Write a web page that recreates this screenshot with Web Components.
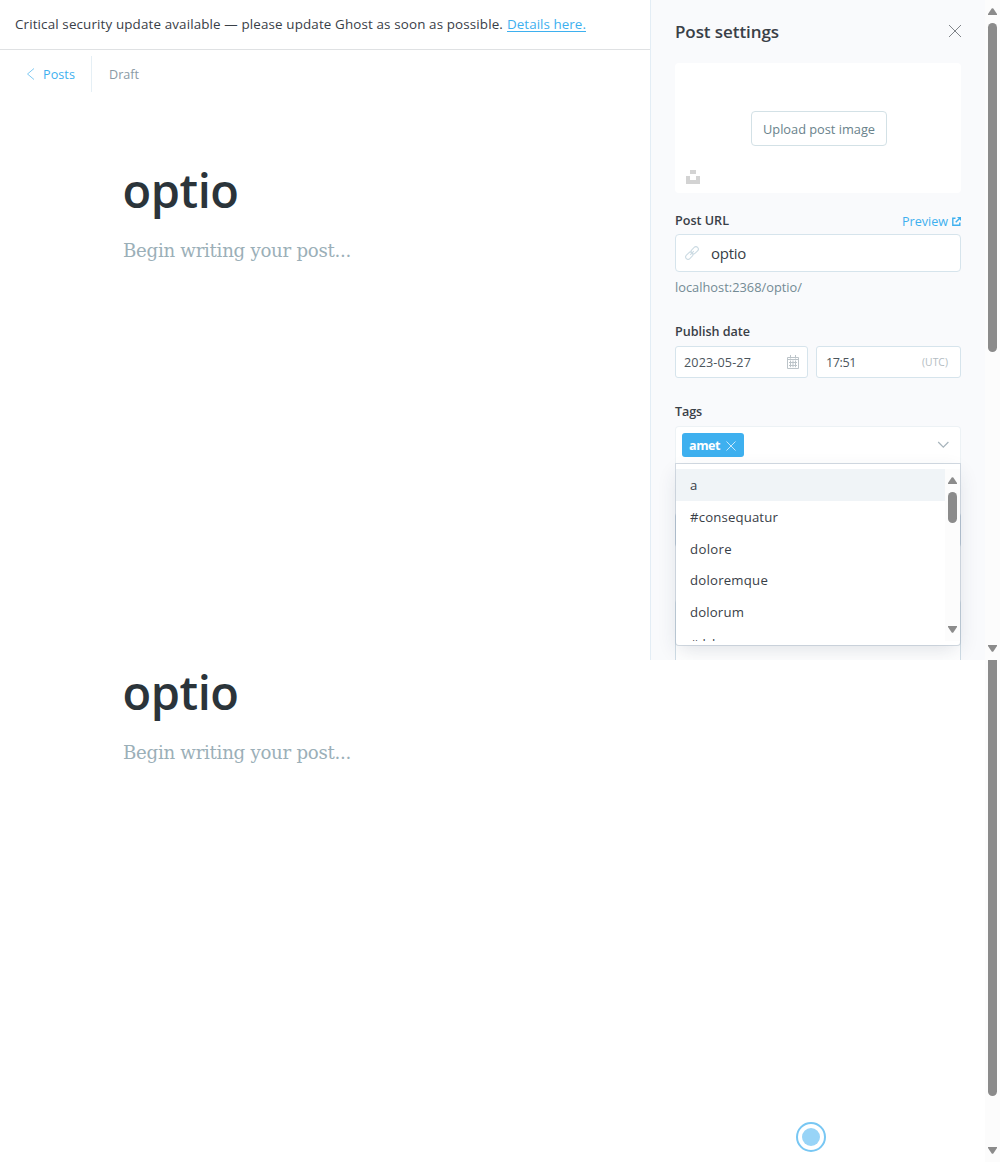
<!DOCTYPE html>
<html lang="en">
<head>
<meta charset="utf-8">
<title>Ghost editor</title>
<style>
html,body{margin:0;padding:0}
body{width:1000px;height:1162px;overflow:hidden;background:#fff;font-family:"Open Sans","Noto Sans",sans-serif;color:#394047}
</style>
</head>
<body>
<ghost-app></ghost-app>
<script>
const define = (name, html, init) => customElements.define(name, class extends HTMLElement {
  connectedCallback() {
    if (this.shadowRoot) return;
    const t = document.createElement('template');
    t.innerHTML = html;
    const root = this.attachShadow({mode: 'open'});
    root.appendChild(t.content.cloneNode(true));
    if (init) init(this, root);
  }
});

// Single line of text whose tracking is tuned to the width in its "w" attribute.
define('fit-text', `<style>:host{display:block;white-space:nowrap;flex:none}span{display:inline-block;text-decoration:var(--deco,none);text-underline-offset:2px}</style><span><slot></slot></span>`, (host, root) => {
  const target = +host.getAttribute('w');
  if (!target) return;
  const span = root.querySelector('span');
  const n = host.textContent.length;
  span.style.letterSpacing = ((target - span.getBoundingClientRect().width) / n) + 'px';
  host.style.width = target + 'px';
});

define('scroll-bar', `<style>
:host{display:flex;flex-direction:column;align-items:center;box-sizing:border-box;width:15px;background:#fcfcfc;flex:none}
svg{display:block;flex:none}
i{display:block;width:9px;border-radius:5px;background:#8b8b8b;height:var(--thumb);margin-top:var(--gap,8px)}
b{flex:1}
:host([tail]) i{border-radius:0 0 5px 5px;margin-top:0}
:host([tail]) .up{display:none}
</style>
<svg class="up" width="9" height="7" viewBox="0 0 9 7"><path d="M0 7V6L3.7.6Q4.5-.2 5.3.6L9 6V7Z" fill="#8b8b8b"/></svg><i></i><b></b>
<svg width="9" height="7" viewBox="0 0 9 7"><path d="M0 0V1L3.7 6.4Q4.5 7.2 5.3 6.4L9 1V0Z" fill="#8b8b8b"/></svg>`);

define('update-banner', `<style>
:host{display:flex;box-sizing:border-box;height:50px;padding:12px 15px 0;border-bottom:1px solid #dfe1e3;font-size:13.4px;line-height:24px;color:#394047;gap:4px}
a{color:#3eb0ef;--deco:underline}
</style><fit-text w="488">Critical security update available — please update Ghost as soon as possible.</fit-text><a><fit-text w="79">Details here.</fit-text></a>`);

define('editor-header', `<style>
:host{display:flex;height:36px;margin-top:6px;font-size:12.6px;line-height:38px}
.back{display:flex;box-sizing:border-box;width:92px;padding-left:26px;border-right:1px solid #e5eff5;color:#3eb0ef;gap:8px;align-items:center}
.back fit-text{align-self:flex-start}
fit-text.d{margin-left:17px;color:#8a9aa5}
svg{display:block}
</style><div class="back"><svg width="9" height="12" viewBox="0 0 9 12"><path d="M8 .5L1.5 6 8 11.5" fill="none" stroke="#7fc9f2" stroke-width="1"/></svg><fit-text w="32">Posts</fit-text></div><fit-text class="d" w="30">Draft</fit-text>`);

define('post-draft', `<style>
:host{display:block;padding-left:123px}
.t{font-size:47px;font-weight:560;line-height:60px;color:#2b343a;margin:0 0 0 -.5px}
.p{font-family:"DejaVu Serif",serif;font-size:18.2px;line-height:30px;color:#9bafb8;margin-top:16px}
</style><fit-text class="t" w="116">optio</fit-text><fit-text class="p" w="228">Begin writing your post...</fit-text>`);

define('image-uploader', `<style>
:host{display:flex;flex-direction:column;align-items:center;box-sizing:border-box;height:130px;background:#fff;border-radius:4px;padding-top:48px;margin-top:13px}
button{font:inherit;margin:0 0 0 2px;padding:1px 11px 0;width:136px;height:35px;border:1px solid #d3e1e6;border-radius:4px;background:#fff;font-size:12.8px;line-height:33px;color:#69828b;text-align:left}
svg{align-self:flex-start;margin:24px 0 0 11px;display:block}
fit-text{height:32px}
</style><button><fit-text w="112">Upload post image</fit-text></button>
<svg width="14" height="14" viewBox="0 0 14 14"><path d="M4 0h6v4H4zM0 6h4v4h6V6h4v8H0z" fill="#d3d3d3"/></svg>`);

define('field-label', `<style>:host{display:block;box-sizing:border-box;height:20px;font-size:12.6px;font-weight:600;line-height:22px;color:#394047}</style><slot></slot>`);

define('url-field', `<style>
:host{display:block;margin-top:17px}
.top{display:flex;justify-content:space-between;height:24px}
.pv{display:flex;gap:4px;align-items:center;height:22px;font-size:12.6px;line-height:24px;color:#3eb0ef}
.pv fit-text{height:22px}
.in{display:flex;align-items:center;box-sizing:border-box;height:38px;border:1px solid #d6e4ec;border-radius:4px;background:#fff;padding-left:9px;gap:12px;font-size:15px;line-height:36px;color:#394047}
.hint{font-size:12.8px;line-height:20px;margin-top:5px;color:#738a94}
</style><div class="top"><field-label><fit-text w="54">Post URL</fit-text></field-label><div class="pv"><fit-text w="46">Preview</fit-text>
<svg width="9" height="9" viewBox="0 0 9 9" fill="none" stroke="#3eb0ef" stroke-width="1.4"><path d="M3.5 1.2H.8v7h7V5.5M3.7 5.3L7 2"/><path d="M5 0h4v4z" fill="#3eb0ef" stroke="none"/></svg></div></div>
<div class="in"><svg width="14" height="14" viewBox="0 0 14 14" fill="none" stroke="#ccdbe3" stroke-width="1.1"><g transform="rotate(-45 7 7)"><rect x="-.9" y="4.6" width="8.2" height="4.8" rx="2.4"/><rect x="6.7" y="4.6" width="8.2" height="4.8" rx="2.4"/><path d="M4.5 7h5"/></g></svg><fit-text w="35">optio</fit-text></div>
<fit-text class="hint" w="127">localhost:2368/optio/</fit-text>`);

define('date-field', `<style>
:host{display:block;margin-top:24px}
.row{display:flex;gap:8px;margin-top:5px}
.b{display:flex;align-items:center;justify-content:space-between;box-sizing:border-box;height:32px;border:1px solid #d6e4ec;border-radius:3px;background:#fff;font-size:12.6px;line-height:32px;color:#4b555c;width:133px;padding:0 8px 0 8px}
.b fit-text{height:30px}
.b+.b{width:145px;padding:0 12px 0 9px}
.b .u{font-size:10.3px;line-height:30px;color:#b3bcc2}
</style><field-label><fit-text w="75">Publish date</fit-text></field-label><div class="row"><div class="b"><fit-text w="67">2023-05-27</fit-text>
<svg width="12" height="14" viewBox="0 0 12 14" fill="none" stroke="#bcc4c9" stroke-width="1"><path d="M.5 2.5h11v11H.5zM.5 4.5h11M3.5 0v3.5M8.5 0v3.5M2 7.5h8M2 10.5h8M3.5 5.5v6.7M6 5.5v6.7M8.5 5.5v6.7"/></svg></div><div class="b"><fit-text w="30">17:51</fit-text><fit-text class="u" w="26">(UTC)</fit-text></div></div>`);

define('tag-token', `<style>:host{display:flex;align-items:center;box-sizing:border-box;width:62px;height:24px;border-radius:3px;background:#3eb0ef;color:#fff;padding:0 7px;gap:6px;font-size:12.6px;font-weight:700;line-height:26px}fit-text{height:24px}svg{margin-top:1px}</style>
<fit-text w="31">amet</fit-text><svg width="10" height="10" viewBox="0 0 10 10"><path d="M.5.5l9 9M9.5.5l-9 9" stroke="#c8e8fb" stroke-width="1"/></svg>`);

define('tag-menu', `<style>
:host{display:flex;box-sizing:border-box;width:286px;height:183px;border:1px solid rgba(170,184,198,.5);border-radius:0 0 4px 4px;background:#fff;background-clip:padding-box;box-shadow:0 7px 20px -4px rgba(39,54,90,.16);padding:5px 0 4px}
.l{flex:1;height:172px;overflow:hidden;font-size:13.2px;color:#394047}
.l div{height:31.75px;line-height:32px;padding-left:14px}
.l div:first-child{background:#f0f4f7}
scroll-bar{height:172px;padding:8px 0 8px}
</style><div class="l"><div><fit-text w="7.5">a</fit-text></div><div><fit-text w="88">#consequatur</fit-text></div><div><fit-text w="42">dolore</fit-text></div><div><fit-text w="78">doloremque</fit-text></div><div><fit-text w="54">dolorum</fit-text></div><div><fit-text w="48">#dolores</fit-text></div></div><scroll-bar style="--thumb:31px;--gap:8px"></scroll-bar>`);

define('tags-field', `<style>
:host{display:block;margin-top:23px;position:relative}
.s{display:flex;align-items:center;justify-content:space-between;box-sizing:border-box;height:37px;margin-top:5px;background:#fff;border:1px solid #edf2f5;border-bottom:0;border-radius:4px 4px 0 0;padding:0 11px 0 6px}
tag-menu{position:absolute;left:0;top:62px;z-index:2}
</style><field-label><fit-text w="27">Tags</fit-text></field-label><div class="s"><tag-token></tag-token><svg width="12" height="8" viewBox="0 0 12 8"><path d="M1.2 1L6.3 6.2 11.4 1" fill="none" stroke="#a7b4bc" stroke-width="1.2"/></svg></div><tag-menu></tag-menu>`);

define('settings-panel', `<style>
:host{display:block;box-sizing:border-box;width:335px;height:660px;overflow:hidden;background:#f9fafc;border-left:1px solid #e3edf5;padding:0 24px}
header{display:flex;align-items:center;justify-content:space-between;height:50px}
header fit-text{font-size:17px;font-weight:600;line-height:26px;color:#394047;margin-top:14px}
header svg{margin:12px -1px 0 0}
.in{box-sizing:border-box;height:36px;margin-top:49px;border:1px solid #b8c8d6;border-radius:4px;background:#fff}
.area{height:100px;margin-top:51px;border-color:#cfdce5}
</style><header><fit-text w="104">Post settings</fit-text><svg width="14" height="14" viewBox="0 0 14 14"><path d="M1 1l12 12M13 1L1 13" stroke="#808489" stroke-width="1"/></svg></header>
<image-uploader></image-uploader><url-field></url-field><date-field></date-field><tags-field></tags-field><div class="in"></div><div class="in area"></div>`);

define('record-dot', `<style>:host{display:flex;align-items:center;justify-content:center;box-sizing:border-box;width:30px;height:30px;border:2px solid #78c7f3;border-radius:50%;background:#fff}i{width:18px;height:18px;border-radius:50%;background:#98d4f7}</style><i></i>`);

define('ghost-app', `<style>
:host{display:flex;flex-direction:column;width:1000px;height:1162px}
.a,.b{display:flex}.a{height:660px}.b{height:502px}
main{flex:1;min-width:0}
.a post-draft{padding-top:67.5px}
.b main{display:flex;flex-direction:column;justify-content:space-between;padding:2px 0 10px;box-sizing:border-box}
.b post-draft{display:flow-root}
record-dot{margin-left:796px}
</style><div class="a"><main><update-banner></update-banner><editor-header></editor-header><post-draft></post-draft></main><settings-panel></settings-panel><scroll-bar style="--thumb:329px;padding:8px 0"></scroll-bar></div>
<div class="b"><main><post-draft></post-draft><record-dot></record-dot></main><scroll-bar tail style="--thumb:436px;padding-bottom:8px"></scroll-bar></div>`);
</script>
</body>
</html>
